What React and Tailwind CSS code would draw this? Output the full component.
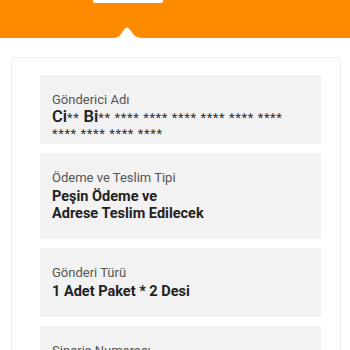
import React from "react";

const rows = [
  { label: "Ödeme ve Teslim Tipi", value: ["Peşin Ödeme ve", "Adrese Teslim Edilecek"] },
  { label: "Gönderi Türü", value: ["1 Adet Paket * 2 Desi"] },
  { label: "Sipariş Numarası", value: [] },
];

function Stars({ children }) {
  return <span className="text-[13px] font-normal tracking-[0.6px] text-[#333]">{children}</span>;
}

function InfoBox({ label, className = "pb-[17px]", children }) {
  return (
    <div className={"bg-[#f2f2f2] px-[12px] pt-[17px] " + className}>
      <div className="text-[13px] leading-[16px] text-[#555]">{label}</div>
      {children}
    </div>
  );
}

export default function App() {
  return (
    <div className="min-h-[350px] bg-white font-['Roboto',sans-serif] overflow-hidden">
      <div className="relative h-[38px] bg-[#ff8c00]">
        <div className="ml-[93px] h-[3px] w-[70px] rounded-b-[2px] bg-white" />
        <svg
          className="absolute bottom-0 left-[113px]"
          width="30"
          height="13"
          viewBox="0 0 30 13"
        >
          <path d="M0 13 C5 13 7 11 10 6 Q14 -1 18 6 C21 11 24 13 30 13 Z" fill="#fff" />
        </svg>
      </div>

      <div className="mt-[19px] ml-[11px] w-[330px] rounded-[4px] border border-[#eeeeee] pl-[28px] pr-[19px] pt-[17px] pb-[20px]">
        <div className="flex flex-col gap-[9px]">
          <InfoBox label="Gönderici Adı" className="pb-[3px]">
            <div className="mt-[1px] max-w-[250px] text-[16.5px] leading-[15px] font-semibold text-[#222]">
              Ci<Stars>**</Stars> Bi<Stars>** </Stars><Stars>**** **** **** **** **** **** **** **** **** ****</Stars>
            </div>
          </InfoBox>
          {rows.map((r) => (
            <InfoBox key={r.label} label={r.label}>
              <div className="mt-[2px] text-[14.5px] leading-[17px] font-bold text-[#222]">
                {r.value.map((v) => (
                  <div key={v}>{v}</div>
                ))}
              </div>
            </InfoBox>
          ))}
        </div>
      </div>
    </div>
  );
}
